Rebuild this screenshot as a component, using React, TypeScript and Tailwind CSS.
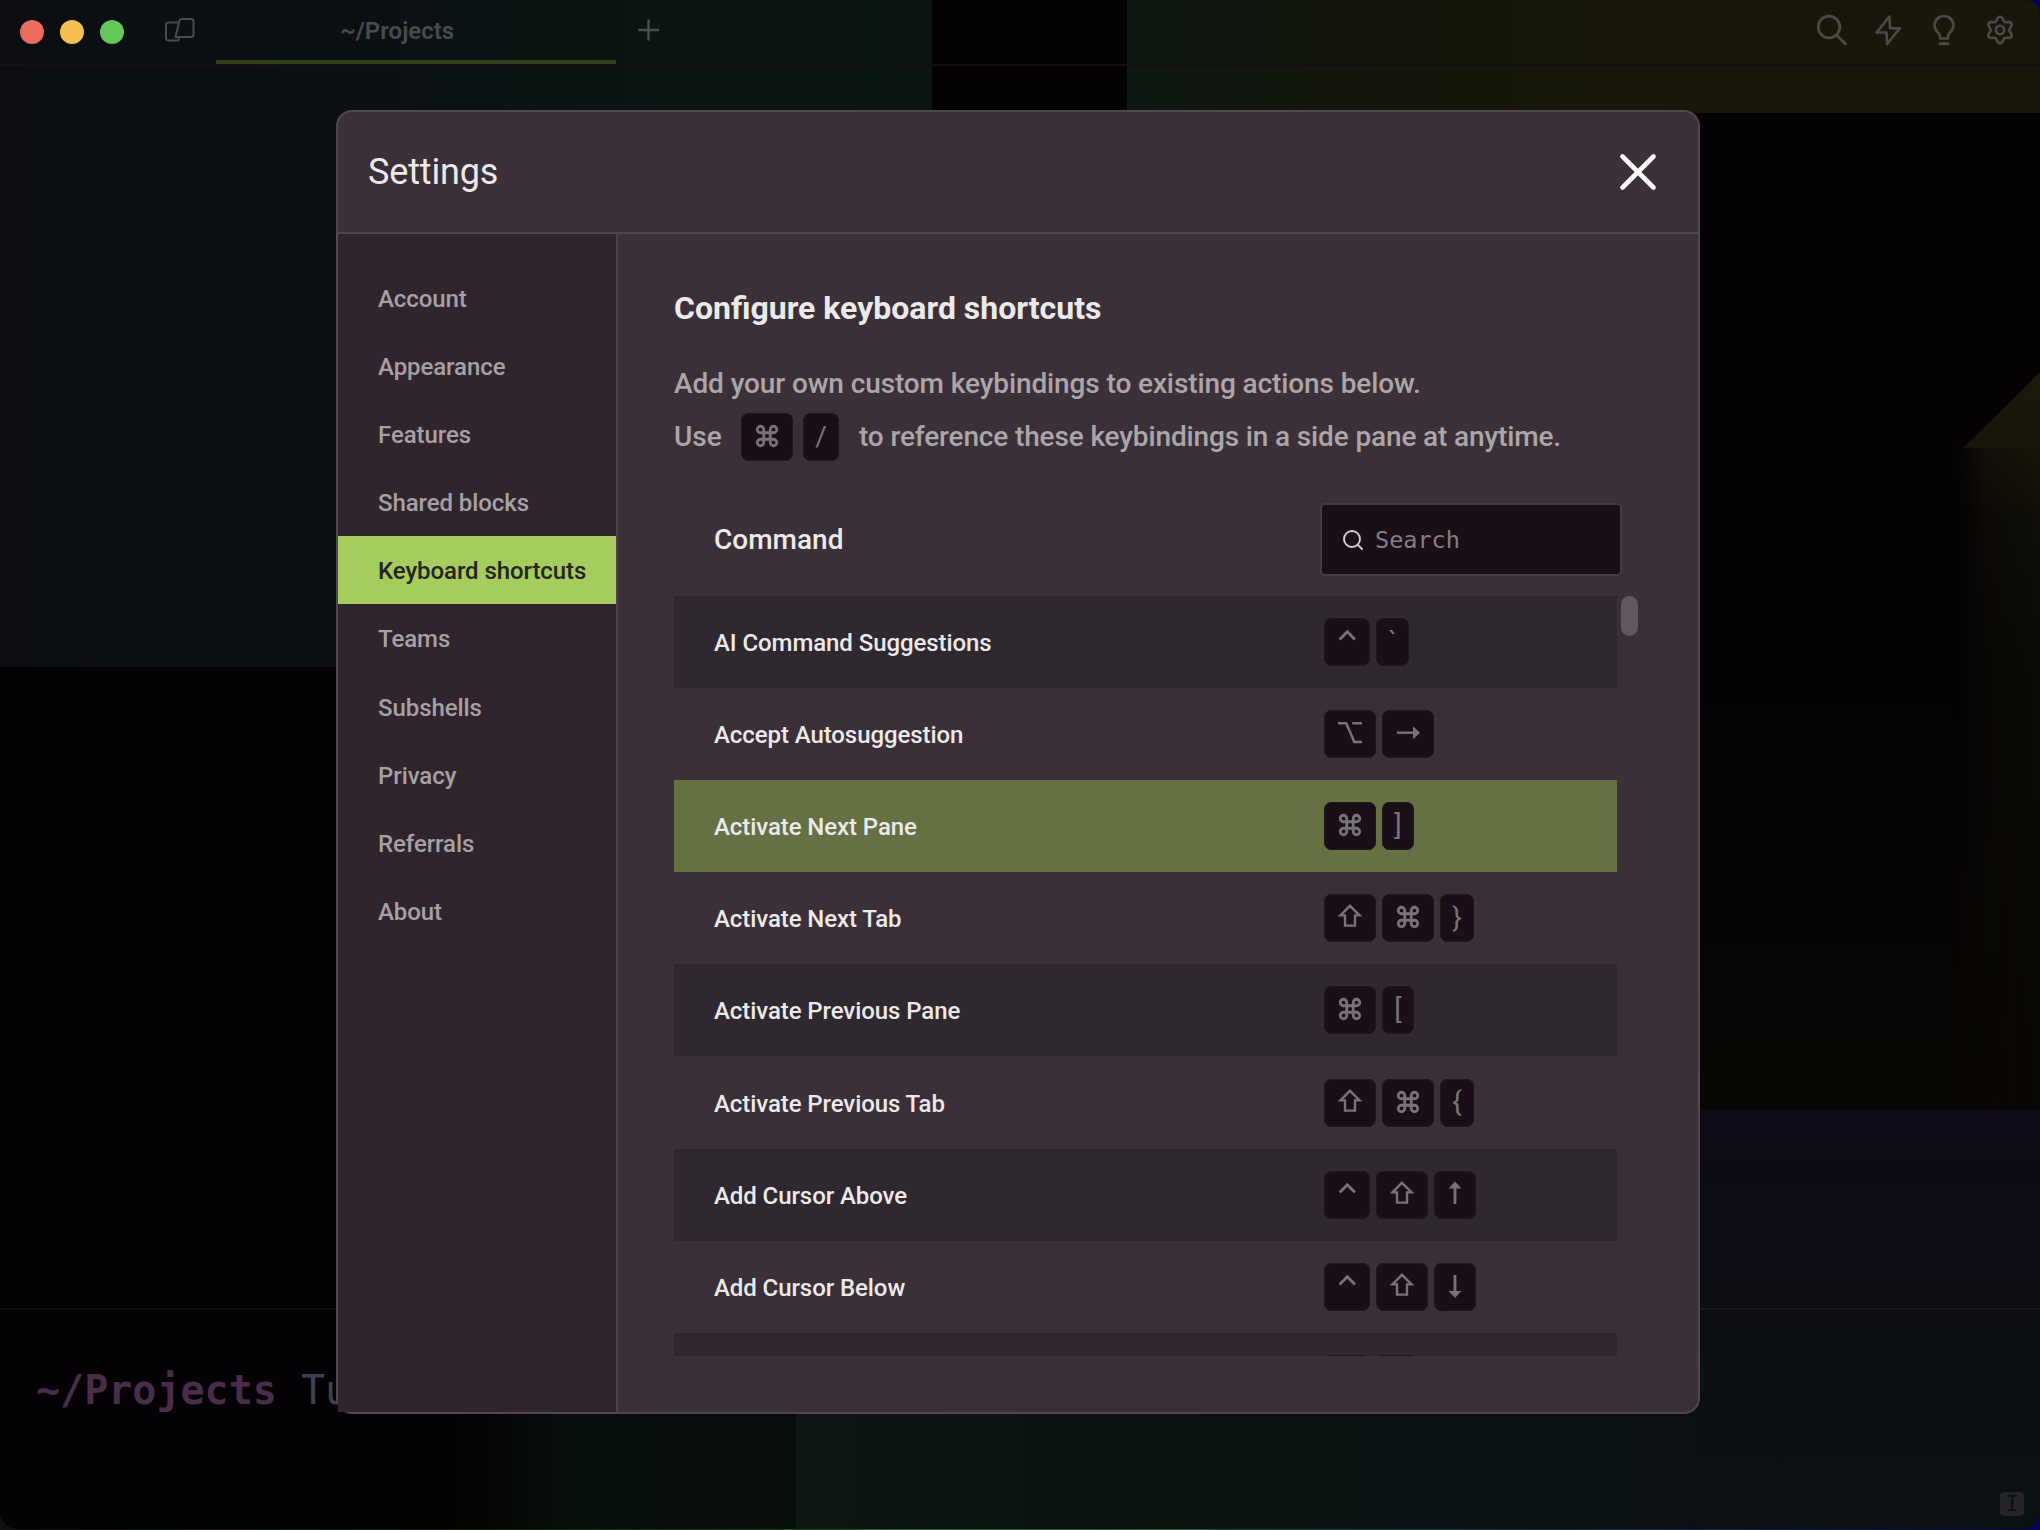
import type { ReactNode } from "react";
import { Command as CommandIcon, Search } from "lucide-react";

const SANS = "font-['Roboto','Liberation_Sans',sans-serif]";
const MONO = "font-['DejaVu_Sans_Mono','Liberation_Mono',monospace]";

const NAV = [
  "Account",
  "Appearance",
  "Features",
  "Shared blocks",
  "Keyboard shortcuts",
  "Teams",
  "Subshells",
  "Privacy",
  "Referrals",
  "About",
];

const SHORTCUTS: { name: string; keys: string[] }[] = [
  { name: "AI Command Suggestions", keys: ["ctrl", "`"] },
  { name: "Accept Autosuggestion", keys: ["opt", "right"] },
  { name: "Activate Next Pane", keys: ["cmd", "]"] },
  { name: "Activate Next Tab", keys: ["shift", "cmd", "}"] },
  { name: "Activate Previous Pane", keys: ["cmd", "["] },
  { name: "Activate Previous Tab", keys: ["shift", "cmd", "{"] },
  { name: "Add Cursor Above", keys: ["ctrl", "shift", "up"] },
  { name: "Add Cursor Below", keys: ["ctrl", "shift", "down"] },
  { name: "", keys: ["ctrl", "up"] },
];

function KeySvg({ w, children }: { w: number; children: ReactNode }) {
  return (
    <svg
      width={w}
      height={48}
      viewBox={`0 0 ${w} 48`}
      fill="none"
      stroke="currentColor"
      strokeWidth={2.4}
      className="shrink-0"
    >
      {children}
    </svg>
  );
}

function Glyph({ k }: { k: string }) {
  switch (k) {
    case "cmd":
      return <CommandIcon size={26} strokeWidth={2.6} className="-translate-y-px" />;
    case "ctrl":
      return (
        <KeySvg w={46}>
          <path d="M15.6 21.5 23.3 13.8 31 21.5" strokeWidth="2.8" />
        </KeySvg>
      );
    case "opt":
      return (
        <KeySvg w={52}>
          <path d="M14 13.2h8.2L30.4 32H38M28.2 13.2H38" strokeWidth="2.6" />
        </KeySvg>
      );
    case "shift":
      return (
        <KeySvg w={52}>
          <path d="M26 11.8 35.6 21.4H31V31.6H21V21.4H16.4Z" />
        </KeySvg>
      );
    case "right":
      return (
        <KeySvg w={52}>
          <path d="M15 22.7h17" />
          <path d="M31 16.2v13l7-6.5Z" fill="currentColor" stroke="none" />
        </KeySvg>
      );
    case "up":
      return (
        <KeySvg w={42}>
          <path d="M21 33V15" strokeWidth="2.8" />
          <path d="M14.6 17.5h12.8L21 10.5Z" fill="currentColor" stroke="none" />
        </KeySvg>
      );
    case "down":
      return (
        <KeySvg w={42}>
          <path d="M21 12v18" strokeWidth="2.8" />
          <path d="M14.6 28h12.8L21 35Z" fill="currentColor" stroke="none" />
        </KeySvg>
      );
    default:
      return <span className="-mt-px text-[28px] leading-[44px]">{k}</span>;
  }
}

const WIDTHS: Record<string, string> = {
  ctrl: "w-[46px]",
  cmd: "w-[52px]",
  opt: "w-[52px]",
  shift: "w-[52px]",
  right: "w-[52px]",
  up: "w-[42px]",
  down: "w-[42px]",
  "`": "w-[33px]",
  "/": "w-[36px]",
  "]": "w-8",
  "[": "w-8",
  "}": "w-[34px]",
  "{": "w-[34px]",
};

function Key({ k }: { k: string }) {
  return (
    <kbd
      className={`flex h-12 shrink-0 items-center justify-center rounded-lg bg-[#1a0f16] font-normal text-[#787378] shadow-[inset_0_0_0_1px_#20161d] ${SANS} ${WIDTHS[k]}`}
    >
      <Glyph k={k} />
    </kbd>
  );
}

function Wallpaper() {
  return (
    <div className="absolute inset-0 bg-[#040204]">
      <div className="absolute left-0 top-0 h-[667px] w-[932px] bg-[linear-gradient(to_right,#0b0d12,#0b1013_35%,#0b1512_75%,#0b1710)]" />
      <div className="absolute left-[1127px] top-0 h-[113px] w-[913px] bg-[linear-gradient(to_right,#0e1812,#13170d_20%,#17170a_50%,#1a1609_80%,#1a1609)]" />
      <div className="absolute left-[1700px] top-[700px] h-[410px] w-[340px] bg-[linear-gradient(to_bottom,#040204,#090704)]" />
      <div className="absolute left-[1940px] top-[447px] h-[663px] w-[100px] bg-[linear-gradient(to_bottom,#181609,#100e08_10%,#0b0a07_30%,#090704)] [mask-image:linear-gradient(to_right,transparent_15%,rgba(0,0,0,0.7)_45%,black)]" />
      <div className="absolute left-[1963px] top-[372px] h-[76px] w-[77px] bg-[linear-gradient(to_bottom,#1a190a,#181609)] [clip-path:polygon(0_100%,100%_0,100%_100%)]" />
      <div className="absolute left-[460px] top-[1400px] h-[130px] w-[336px] bg-[linear-gradient(to_right,#040204,#08100b_35%,#070d09)]" />
      <div className="absolute left-[796px] top-[1400px] h-[130px] w-[904px] bg-[linear-gradient(to_right,#0c1811,#0c1412_25%,#0b1113)]" />
      <div className="absolute left-[1699px] top-[1110px] h-[420px] w-[341px] bg-[linear-gradient(to_bottom,#0d0b17,#0c0e13_50%,#0b1113)]" />
    </div>
  );
}

const GEAR = Array.from({ length: 72 }, (_, i) => {
  const a = (i / 72) * Math.PI * 2;
  const r = 11.2 + 2 * Math.cos(6 * a);
  return `${(15 + r * Math.sin(a)).toFixed(2)},${(15 - r * Math.cos(a)).toFixed(2)}`;
}).join(" ");

function TitleBar() {
  return (
    <header className="relative flex h-[66px] border-b-2 border-[#150f13] text-[#4a4a4b]">
      <div className="flex w-[216px] items-center pl-5">
        <div className="flex gap-4">
          <span className="size-6 rounded-full bg-[#ec6a5f]" />
          <span className="size-6 rounded-full bg-[#f4bf50]" />
          <span className="size-6 rounded-full bg-[#65c757]" />
        </div>
        <svg width="32" height="26" viewBox="0 0 32 26" fill="none" stroke="currentColor" strokeWidth="2" strokeLinejoin="round" className="-mt-1 ml-[39px]">
          <path d="M15 5.5H5a2 2 0 0 0-2 2v14a2 2 0 0 0 2 2h10.5l.6-2.6" />
          <path d="M18.2 2H28a2.5 2.5 0 0 1 2.5 2.5V17.5A2.5 2.5 0 0 1 28 20H12.5L16.5 3.5A2 2 0 0 1 18.2 2Z" />
        </svg>
      </div>
      <div className="h-16 w-[400px] border-b-4 border-[#323f1b] pl-[124px] text-2xl font-semibold leading-[62px]">
        ~/Projects
      </div>
      <div className="flex flex-1 items-center pb-1 pl-5">
        <svg width="24" height="24" viewBox="0 0 24 24" stroke="#4c4f4f" strokeWidth="2.4">
          <path d="M12.5 1.5v21M2 12h21" />
        </svg>
      </div>
      <div className="flex items-center gap-[26px] pb-1 pr-[25px]">
        <svg width="30" height="32" viewBox="0 0 30 32" fill="none" stroke="currentColor" strokeWidth="2.8" strokeLinecap="round">
          <circle cx="12" cy="13" r="10.8" />
          <path d="m20 21.5 8.5 8.5" />
        </svg>
        <svg width="30" height="32" viewBox="0 0 30 32" fill="none" stroke="currentColor" strokeWidth="2.6" strokeLinejoin="round">
          <path d="M16.5 2.5 3.5 18.5h10L14 30 27 14.2H17Z" />
        </svg>
        <svg width="30" height="32" viewBox="0 0 30 32" fill="none" stroke="currentColor" strokeWidth="2.6" strokeLinecap="round" strokeLinejoin="round">
          <path d="M11 24.5V21.5C10.8 19 5.5 17 5.5 11.5a9.5 9.5 0 0 1 19 0c0 5.5-5.3 7.5-5.5 10v3Z" />
          <path d="M11 29.6h8" />
        </svg>
        <svg width="30" height="30" viewBox="0 0 30 30" fill="none" stroke="currentColor" strokeWidth="2.6" strokeLinejoin="round">
          <polygon points={GEAR} />
          <circle cx="15" cy="15" r="4.2" />
        </svg>
      </div>
    </header>
  );
}

function Sidebar() {
  return (
    <nav className="w-[278px] shrink-0 bg-[#30252d] pt-[30px]">
      {NAV.map((item) => (
        <div
          key={item}
          className={`h-[68.1px] pl-10 text-2xl font-medium leading-[71.5px] tracking-[-0.08px] ${
            item === "Keyboard shortcuts" ? "bg-[#a4cd5d] text-[#262320]" : "text-[#a5a1a4]"
          }`}
        >
          {item}
        </div>
      ))}
    </nav>
  );
}

function ShortcutsPanel() {
  return (
    <section className="flex-1 border-l-2 border-[#4b4148] pl-14 pt-[53px] font-medium">
      <h2 className="text-[32px] font-bold leading-[42px] text-[#ebeaeb]">Configure keyboard shortcuts</h2>
      <p className="mt-[35px] text-[28px] leading-10 tracking-[-0.11px] text-[#aaa6a9]">
        Add your own custom keybindings to existing actions below.
      </p>
      <div className="mt-[9px] flex h-12 items-center text-[28px] text-[#aaa6a9]">
        <span className="w-[67px]">Use</span>
        <span className="mr-5 flex gap-2.5">
          <Key k="cmd" />
          <Key k="/" />
        </span>
        <span className="tracking-[-0.14px]">to reference these keybindings in a side pane at anytime.</span>
      </div>
      <div className="mt-[42px] flex h-[73px] w-[948px] items-center justify-between pl-10">
        <span className="text-[28px] text-[#ebeaeb]">Command</span>
        <div className="flex h-[73px] w-[302px] items-center gap-2.5 rounded-[5px] border-2 border-[#463b43] bg-[#1a0f16] pl-[19px]">
          <Search size={24} strokeWidth={1.9} className="text-[#d3d0d2]" />
          <span className={`pt-0.5 text-[23.5px] font-normal text-[#847f83] ${MONO}`}>Search</span>
        </div>
      </div>
      <div className="mt-5 flex h-[760px] gap-1 overflow-hidden">
        <ul className="w-[943px]">
          {SHORTCUTS.map(({ name, keys }, i) => (
            <li
              key={i}
              className={`flex h-[92.1px] items-center pl-10 ${
                i === 2 ? "bg-[#657043]" : i % 2 === 0 ? "bg-[#2f282e]" : ""
              }`}
            >
              <span className="w-[610px] pt-0.5 text-2xl tracking-[-0.08px] text-[#ebeaeb]">{name}</span>
              <span className="flex gap-1.5">
                {keys.map((k) => (
                  <Key key={k} k={k} />
                ))}
              </span>
            </li>
          ))}
        </ul>
        <div className="h-10 w-[17px] rounded-full bg-[#625960]" />
      </div>
    </section>
  );
}

export default function App() {
  return (
    <div className="h-[1530px] w-[2040px] overflow-hidden bg-[linear-gradient(to_right,#100f12,#14241a_25%,#255a38_45%,#1f4440_70%,#08005a)]">
      <div className={`relative flex h-[1529px] flex-col overflow-hidden rounded-b-[18px] rounded-tr-[14px] ${SANS}`}>
        <Wallpaper />
        <TitleBar />
        <div className="h-[1242px]" />
        <footer className={`relative flex-1 border-t-2 border-white/[0.04] pl-9 text-[40px] ${MONO}`}>
          <p className="pt-[50px] leading-[60px]">
            <span className="font-bold text-[#4a2d4b]">~/Projects</span>
            <span className="text-[#3d4250]"> Tu</span>
          </p>
          <span className="absolute bottom-[13px] right-4 flex size-6 items-center justify-center rounded bg-[#242426] text-[22px] leading-none text-[#0c1013]">
            I
          </span>
        </footer>
        <div
          role="dialog"
          className="absolute left-[336px] top-[110px] flex h-[1304px] w-[1364px] flex-col rounded-2xl border-2 border-[#51474e] bg-[#3c3038]"
        >
          <div className="flex h-[122px] items-center justify-between border-b-2 border-[#51474e] pl-[30px] pr-[40px]">
            <h1 className="text-4xl tracking-[-0.15px] text-[#ebeaeb]">Settings</h1>
            <svg width="40" height="40" viewBox="0 0 40 40" stroke="white" strokeWidth="4.6" strokeLinecap="round">
              <path d="M4.5 4.5l31 31M35.5 4.5l-31 31" />
            </svg>
          </div>
          <div className="flex flex-1">
            <Sidebar />
            <ShortcutsPanel />
          </div>
        </div>
      </div>
    </div>
  );
}
